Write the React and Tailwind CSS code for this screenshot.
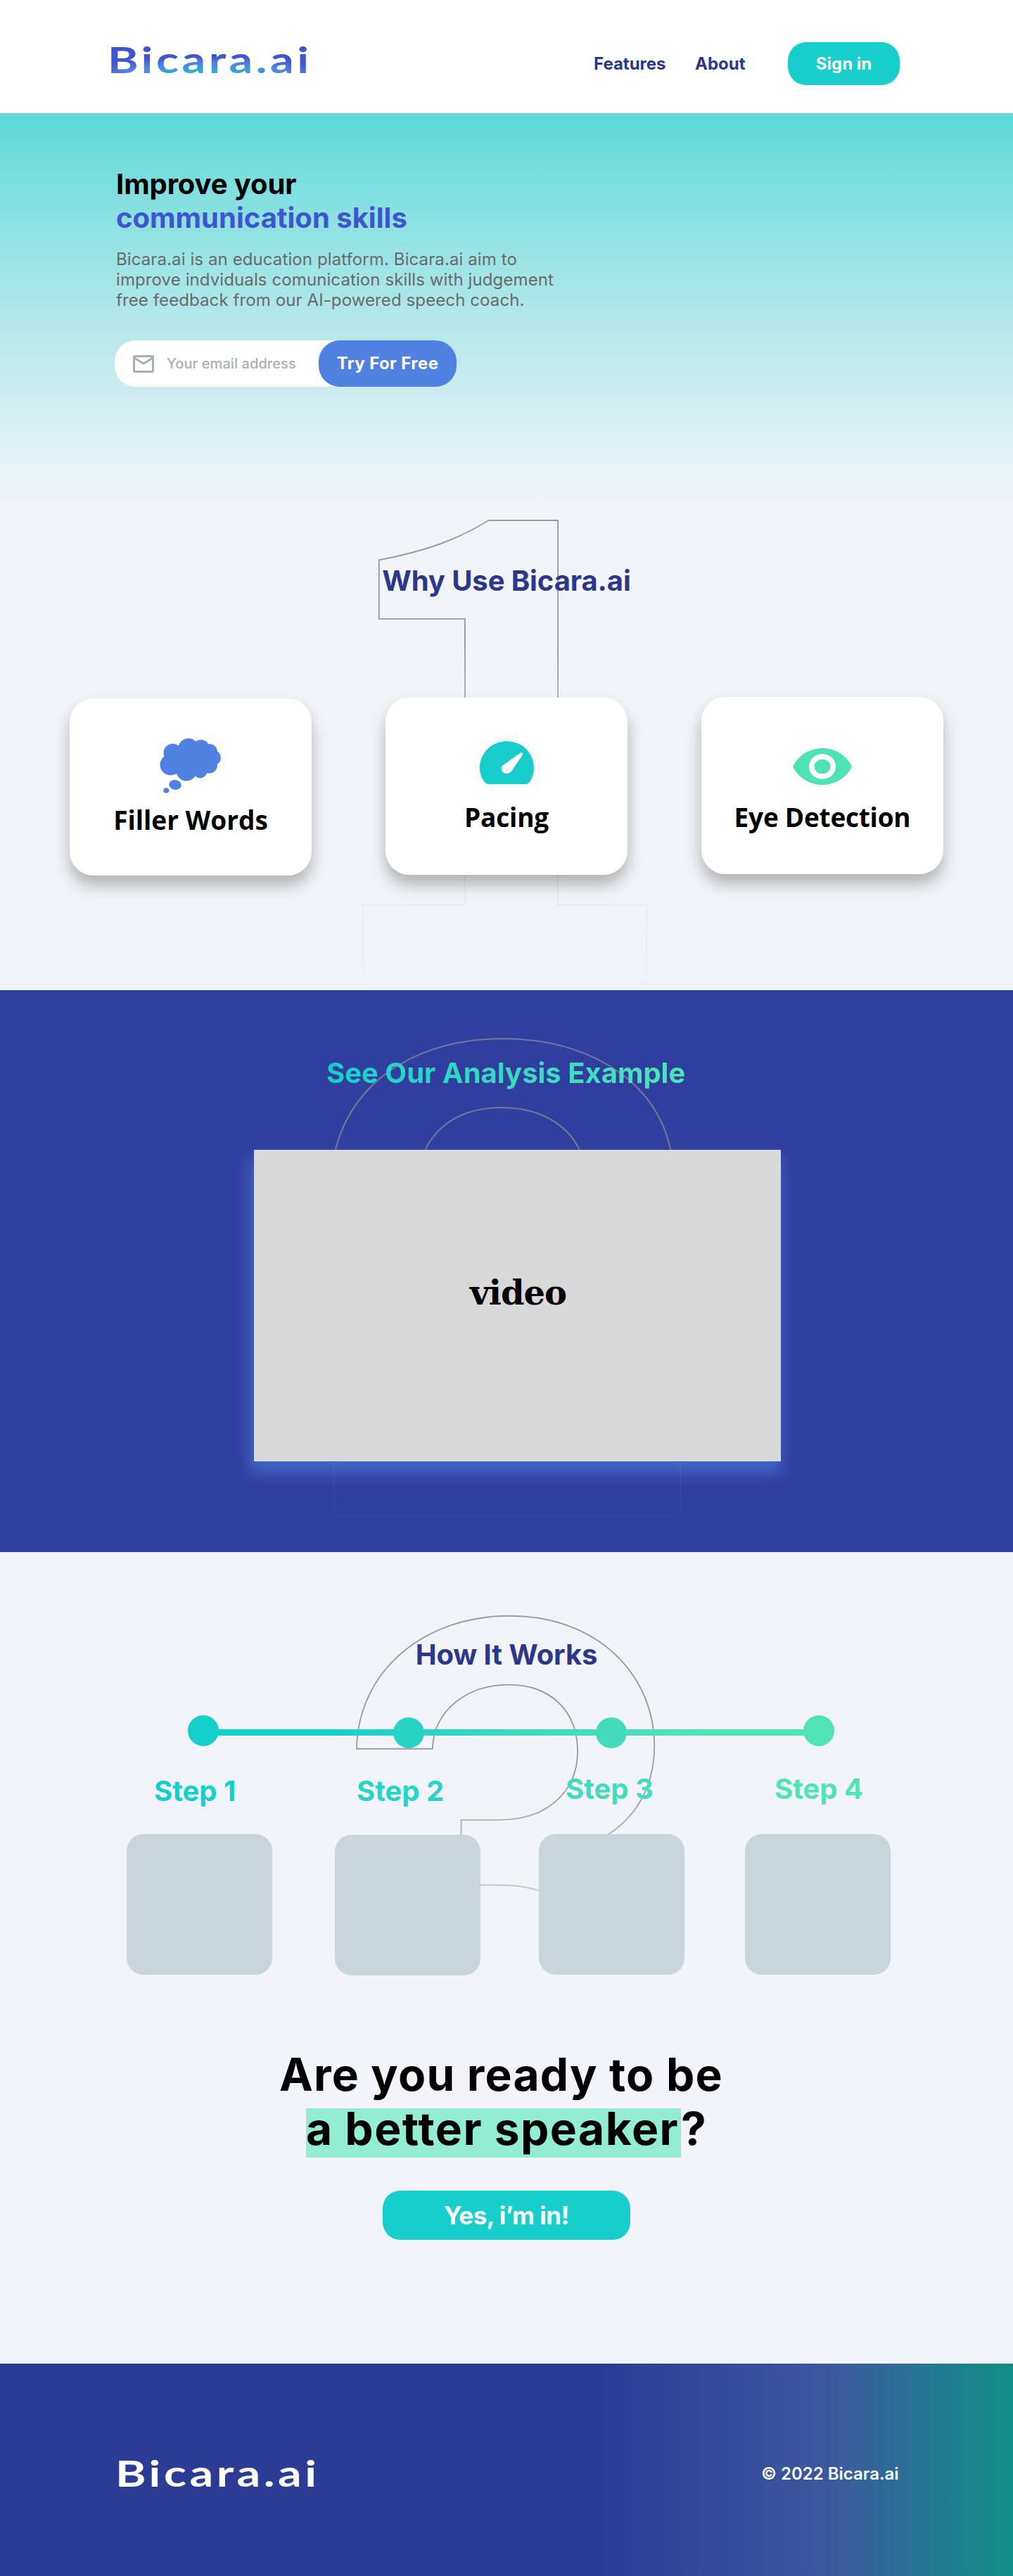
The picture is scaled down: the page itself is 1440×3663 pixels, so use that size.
import React from "react";

function Logo({ id, fill }) {
  return (
    <svg width="284" height="44" viewBox="0 0 284 44" className="block overflow-visible" role="img">
      <defs>
        <radialGradient id={id} gradientUnits="userSpaceOnUse" cx="0" cy="0" r="1" gradientTransform="translate(111 6) scale(138 30)">
          <stop offset="0" stopColor="#14CFCB" />
          <stop offset="0.7" stopColor="#5080E0" />
          <stop offset="1" stopColor="#3F54D1" />
        </radialGradient>
      </defs>
      <text
        x="0"
        y="0"
        transform="translate(-4 39) scale(1.3 1)"
        fill={fill || `url(#${id})`}
        className="font-['Lato',sans-serif] text-[51px] font-bold tracking-[3.5px]"
      >
        Bicara.ai
      </text>
    </svg>
  );
}

function Numeral({ value, transform, color, className, fontClass }) {
  return (
    <svg aria-hidden="true" width="640" height="720" className={"pointer-events-none absolute overflow-visible " + className}>
      <text transform={transform} fill="none" stroke={color} strokeWidth="2.1" strokeLinejoin="round" className={fontClass}>
        {value}
      </text>
    </svg>
  );
}

function ThoughtIcon() {
  return (
    <svg width="88" height="79" viewBox="0 0 88 79" fill="#5080E1" className="block">
      <circle cx="18.5" cy="20.5" r="13" />
      <circle cx="41" cy="15" r="15" />
      <circle cx="58.5" cy="15" r="13" />
      <circle cx="71" cy="19" r="11" />
      <circle cx="76.5" cy="27.5" r="10.5" />
      <circle cx="70.5" cy="38" r="11.5" />
      <circle cx="57.5" cy="46.5" r="10" />
      <circle cx="38" cy="46" r="14.5" />
      <circle cx="15.5" cy="37.5" r="15" />
      <path d="M14 18L42 8L72 16L78 30L66 44L40 54L18 46Z" />
      <ellipse cx="22" cy="66" rx="8.8" ry="6.8" transform="rotate(10 22 66)" />
      <ellipse cx="9.3" cy="74" rx="4.1" ry="3.8" />
    </svg>
  );
}

function GaugeIcon() {
  return (
    <svg width="77" height="61" viewBox="0 0 77 61" className="block">
      <path d="M38.5 0C60 0 77 16.5 77 38C77 45.500 74.700 52.500 71 57.700C69.500 60 67.500 61 65.500 61H12.500C10 61 8 60 6.300 57.500C2.300 52 0 45.500 0 38C0 16.500 17 0 38.500 0Z" fill="#17CECC" />
      <path d="M31.800 35L57 17C59.500 15.300 61.900 17 60.400 20L45.500 42C43.500 44.800 41.500 46 38.300 46C34 46 30.800 43 30.800 39C30.800 37.200 31 36 31.800 35Z" fill="#fff" />
    </svg>
  );
}

function EyeIcon() {
  return (
    <svg width="84" height="52" viewBox="0 0 84 52" className="block">
      <path d="M0 26C7.500 10.500 23 0 42 0C61 0 76.500 10.500 84 26C76.500 41.500 61 52 42 52C23 52 7.500 41.500 0 26Z" fill="#50E2B7" />
      <ellipse cx="42" cy="26" rx="15.300" ry="14" fill="none" stroke="#fff" strokeWidth="7.500" />
    </svg>
  );
}

function Card({ title, icon, className, titleClass }) {
  return (
    <div className={"flex h-[252px] w-[344px] flex-col items-center rounded-[34px] bg-white shadow-[0_14px_22px_rgba(0,0,0,0.27)] " + className}>
      {icon}
      <h3 className={"whitespace-nowrap font-['Open_Sans',sans-serif] text-[37px] leading-[50px] font-bold text-black " + titleClass}>{title}</h3>
    </div>
  );
}

export default function App() {
  return (
    <div className="w-[1440px] overflow-hidden bg-[#F3F4F9] font-['Inter',sans-serif]">
      <header className="flex h-[161px] items-start bg-white pl-[157px]">
        <div className="mt-[65px] w-[687px]">
          <Logo id="logo-top" />
        </div>
        <nav className="mt-[60px] flex h-[61px] items-center text-2xl font-bold text-[#2A378B]">
          <a className="w-[144px]">Features</a>
          <a className="w-[132px]">About</a>
          <button className="h-[61px] w-[159px] rounded-[26px] bg-[#17CECC] font-bold text-white">Sign in</button>
        </nav>
      </header>

      <section className="h-[564px] bg-linear-to-b from-[#58D9D8] to-[#F3F4F9] pt-[77px] pl-[163px]">
        <h1 className="ml-[2px] text-[40px] leading-[48px] font-bold">
          <span className="block tracking-[-0.1px] text-black">Improve your</span>
          <span className="block text-[#3F54D1]">communication skills</span>
        </h1>
        <p className="mt-5 ml-[2px] w-[660px] text-2xl leading-[29px] font-normal tracking-[0.1px] text-[#6A6A6A]">
          Bicara.ai is an education platform. Bicara.ai aim to
          <br />
          improve indviduals comunication skills with judgement
          <br />
          free feedback from our AI-powered speech coach.
        </p>
        <form className="mt-[43px] flex h-[66px] w-[486px] items-center rounded-[30px] bg-white pl-[26px]">
          <svg width="30" height="25" viewBox="0 0 30 25" fill="none" stroke="#A6B1B1" strokeWidth="3" strokeLinejoin="round">
            <rect x="1.500" y="1.500" width="27" height="22" rx="1.500" />
            <path d="M2 4L15 12L28 4" />
          </svg>
          <span className="ml-[18px] w-[216px] text-xl font-medium tracking-[0.080px] whitespace-nowrap text-[#A6B1B1]">Your email address</span>
          <button className="h-[66px] w-[196px] shrink-0 rounded-[30px] bg-[#5080E1] text-2xl font-bold tracking-[0.4px] text-white">Try For Free</button>
        </form>
      </section>

      <section className="relative h-[683px] pt-[77px]">
        <Numeral
          value="1"
          color="#9B9B9B"
          transform="translate(42 671) scale(0.905 0.91)"
          className="top-0 left-[400px] [mask-image:linear-gradient(to_bottom,#000_26%,rgba(0,0,0,0.13)_74%,rgba(0,0,0,0.04)_94%)]"
          fontClass="font-['Noto_Sans_CJK_JP',sans-serif] text-[1000px] font-bold"
        />
        <h2 className="relative text-center text-[40px] leading-[48px] font-bold tracking-[-0.1px] text-[#2A378B]">Why Use Bicara.ai</h2>
        <div className="relative mt-[141px] ml-[99px] flex gap-[105px]">
          <Card title="Filler Words" icon={<ThoughtIcon />} className="mt-[2px] pt-[57px]" titleClass="mt-[12px]" />
          <Card title="Pacing" icon={<GaugeIcon />} className="mt-[1px] pt-[62px]" titleClass="mt-[22px] tracking-[-0.2px]" />
          <Card title="Eye Detection" icon={<EyeIcon />} className="pt-[73px]" titleClass="mt-[21px] tracking-[-0.25px]" />
        </div>
      </section>

      <section className="relative h-[799px] bg-[#303F9F] pt-[94px]">
        <Numeral
          value="2"
          color="#77778F"
          transform="translate(10 718) scale(0.99 0.921)"
          className="top-[30px] left-[400px] [mask-image:linear-gradient(to_bottom,#000_35%,rgba(0,0,0,0.3)_88%,rgba(0,0,0,0.05)_100%)]"
          fontClass="font-['Inter',sans-serif] text-[1000px] font-semibold"
        />
        <h2 className="relative ml-[464px] w-[511px] bg-linear-to-r from-[#14CFCB] to-[#50E3B6] bg-clip-text text-[40px] leading-[48px] font-bold whitespace-nowrap text-transparent">
          See Our Analysis Example
        </h2>
        <div className="relative mt-[85px] ml-[361px] flex h-[443px] w-[749px] justify-center bg-[#D9D9D9] pt-[173px] pl-[2px] shadow-[-3px_14px_20px_3px_rgba(80,128,225,0.6)]">
          <span className="font-['DejaVu_Serif',serif] text-[48px] leading-[60px] font-bold tracking-[-1px] text-black">video</span>
        </div>
      </section>

      <section className="relative h-[1154px] pt-[122px]">
        <Numeral
          value="3"
          color="#9B9B9B"
          transform="translate(49 739) scale(0.86 0.92)"
          className="top-[30px] left-[400px] [mask-image:linear-gradient(to_bottom,#000_40%,rgba(0,0,0,0.55)_60%,transparent_78%)]"
          fontClass="font-['Inter',sans-serif] text-[1000px] font-semibold"
        />
        <h2 className="relative text-center text-[40px] leading-[48px] font-bold tracking-[-0.1px] text-[#2A378B]">How It Works</h2>

        <div className="relative mt-[62px] ml-[267px] flex h-[47px] w-[919px] items-start">
          <div className="absolute top-[20px] left-[22px] h-[9px] w-[875px] bg-linear-to-r from-[#14CFCB] from-20% to-[#50E3B6] to-80%" />
          <div className="relative size-[44px] rounded-full bg-[#14CFCB]" />
          <div className="relative mt-[3px] ml-[248px] size-[44px] rounded-full bg-[#27D3C6]" />
          <div className="relative mt-[3px] ml-[244px] size-[44px] rounded-full bg-[#42DCBC]" />
          <div className="relative ml-[251px] size-[44px] rounded-full bg-[#50E3B6]" />
        </div>

        <div className="relative mt-[37px] ml-[219px] flex text-[40px] leading-[48px] font-bold whitespace-nowrap">
          <span className="w-[288px] text-[#14CFCB]">Step 1</span>
          <span className="w-[297px] text-[#26D3C6]">Step 2</span>
          <span className="-mt-[3px] w-[297px] text-[#42DCBC]">Step 3</span>
          <span className="-mt-[3px] text-[#50E3B6]">Step 4</span>
        </div>

        <div className="relative mt-[37px] ml-[180px] flex items-start">
          <div className="h-[200px] w-[207px] rounded-[24px] bg-[#C8D5DA]" />
          <div className="mt-px ml-[89px] h-[200px] w-[207px] rounded-[24px] bg-[#C8D5DA]" />
          <div className="ml-[83px] h-[200px] w-[207px] rounded-[24px] bg-[#C8D5DA]" />
          <div className="ml-[86px] h-[200px] w-[207px] rounded-[24px] bg-[#C8D5DA]" />
        </div>

        <div className="mt-[102px] text-[64px] leading-[77px] font-bold tracking-[1.2px] text-black">
          <p className="ml-[397px] whitespace-nowrap">Are you ready to be</p>
          <p className="ml-[435px] flex h-[77px] items-start whitespace-nowrap">
            <span className="h-[80px] w-[533px] bg-[linear-gradient(to_bottom,transparent_10px,#92EDD2_10px)] tracking-[1.5px]">a better speaker</span>
            <span>?</span>
          </p>
        </div>
        <button className="mt-[50px] ml-[544px] block h-[70px] w-[352px] rounded-[25px] bg-[#17CECC] text-[35px] font-bold tracking-[-0.5px] text-white">
          Yes, i’m in!
        </button>
      </section>

      <footer className="flex h-[302px] items-start bg-[linear-gradient(90deg,#2C3B94_0%,#2C3B94_59%,#3C599F_82%,#0F9088_100%)] pl-[168px]">
        <div className="mt-[136px] w-[914px]">
          <Logo id="logo-bottom" fill="#fff" />
        </div>
        <p className="mt-[142px] text-2xl leading-[29px] font-semibold text-white">© 2022 Bicara.ai</p>
      </footer>
    </div>
  );
}
